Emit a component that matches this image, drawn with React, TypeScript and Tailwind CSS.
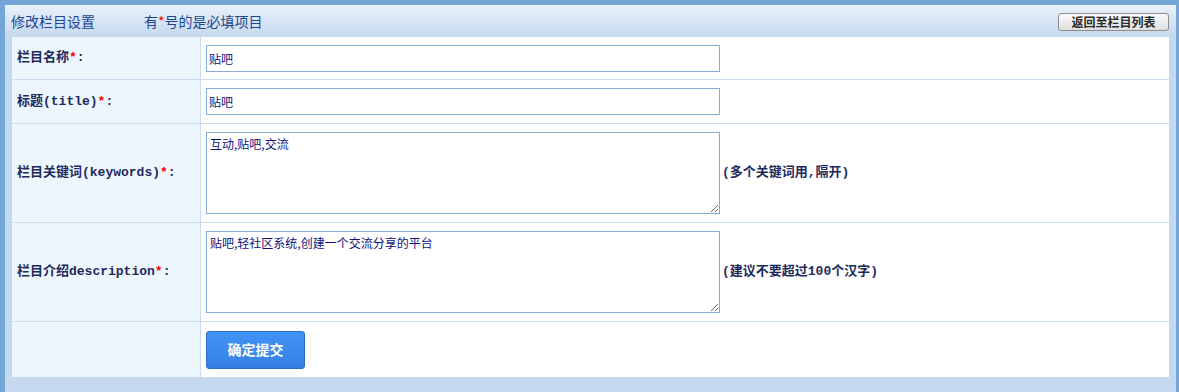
import React from "react";

const cjk = "font-['Liberation_Mono','Noto_Sans_CJK_SC',monospace]";

function Star() {
  return <span className="text-[#ff0000]">*</span>;
}

function Row({
  label,
  children,
  h,
  last,
}: {
  label?: React.ReactNode;
  children: React.ReactNode;
  h: string;
  last?: boolean;
}) {
  return (
    <div className={`flex ${h} ${last ? "" : "border-b border-[#c9dcef]"}`}>
      <div
        className={`w-[189px] shrink-0 bg-[#eef6fd] border-r border-[#c9dcef] flex items-center pl-[5px] text-[13px] font-bold text-[#1d2a5c] ${cjk}`}
      >
        {label}
      </div>
      <div className="flex-1 bg-white flex items-center pl-[5px]">{children}</div>
    </div>
  );
}

export default function App() {
  const inputCls =
    "w-[514px] h-[27px] border border-[#86acd8] bg-white px-[2px] text-[12px] text-[#10107a] font-['Noto_Sans_CJK_SC',sans-serif] outline-none";
  const areaCls =
    "w-[514px] h-[82px] border border-[#86acd8] bg-white px-[3px] py-[1px] text-[12px] leading-[20px] text-[#10107a] font-['Noto_Sans_CJK_SC',sans-serif] outline-none resize";
  const hintCls = `ml-[2px] text-[13px] font-bold text-[#1d2a5c] ${cjk}`;
  return (
    <div className="w-[1179px] h-[392px] bg-[#74a5d8] pt-[5px] pl-[5px] pr-[3px]">
      <div className="h-full bg-[#c5d9ee] flex flex-col">
        <div className="h-[32px] shrink-0 flex items-center justify-between pl-[6px] pr-[7px] bg-gradient-to-b from-[#e8f0fb] to-[#c5d8ee] border-t border-[#f4f8fd]">
          <div className="flex items-center text-[14px] text-[#1d4690] font-['Noto_Sans_CJK_SC',sans-serif]">
            <span>修改栏目设置</span>
            <span className="ml-[49px]">
              有<span className="text-[#ff0000]">*</span>号的是必填项目
            </span>
          </div>
          <button className="w-[111px] h-[18px] mt-[1px] rounded-[3px] border border-[#8d8d8d] bg-gradient-to-b from-[#fbfbfb] to-[#dedede] text-[12px] font-bold text-[#2b2b2b] leading-[16px] font-['Noto_Sans_CJK_SC',sans-serif]">
            返回至栏目列表
          </button>
        </div>
        <div className="mx-[7px] flex flex-col">
          <Row
            h="h-[43px]"
            label={
              <span>
                栏目名称<Star />:
              </span>
            }
          >
            <input className={inputCls} defaultValue="贴吧" />
          </Row>
          <Row
            h="h-[44px]"
            label={
              <span>
                标题(title)<Star />:
              </span>
            }
          >
            <input className={inputCls} defaultValue="贴吧" />
          </Row>
          <Row
            h="h-[99px]"
            label={
              <span>
                栏目关键词(keywords)<Star />:
              </span>
            }
          >
            <textarea className={areaCls} defaultValue="互动,贴吧,交流" />
            <span className={hintCls}>(多个关键词用,隔开)</span>
          </Row>
          <Row
            h="h-[99px]"
            label={
              <span>
                栏目介绍description<Star />:
              </span>
            }
          >
            <textarea
              className={areaCls}
              defaultValue="贴吧,轻社区系统,创建一个交流分享的平台"
            />
            <span className={hintCls}>(建议不要超过100个汉字)</span>
          </Row>
          <Row h="h-[55px]" last label={null}>
            <button className="w-[99px] h-[38px] rounded-[3px] border border-[#2c6cc9] bg-gradient-to-b from-[#4193f7] to-[#3780e3] text-white text-[14px] font-bold font-['Noto_Sans_CJK_SC',sans-serif]">
              确定提交
            </button>
          </Row>
        </div>
      </div>
    </div>
  );
}
